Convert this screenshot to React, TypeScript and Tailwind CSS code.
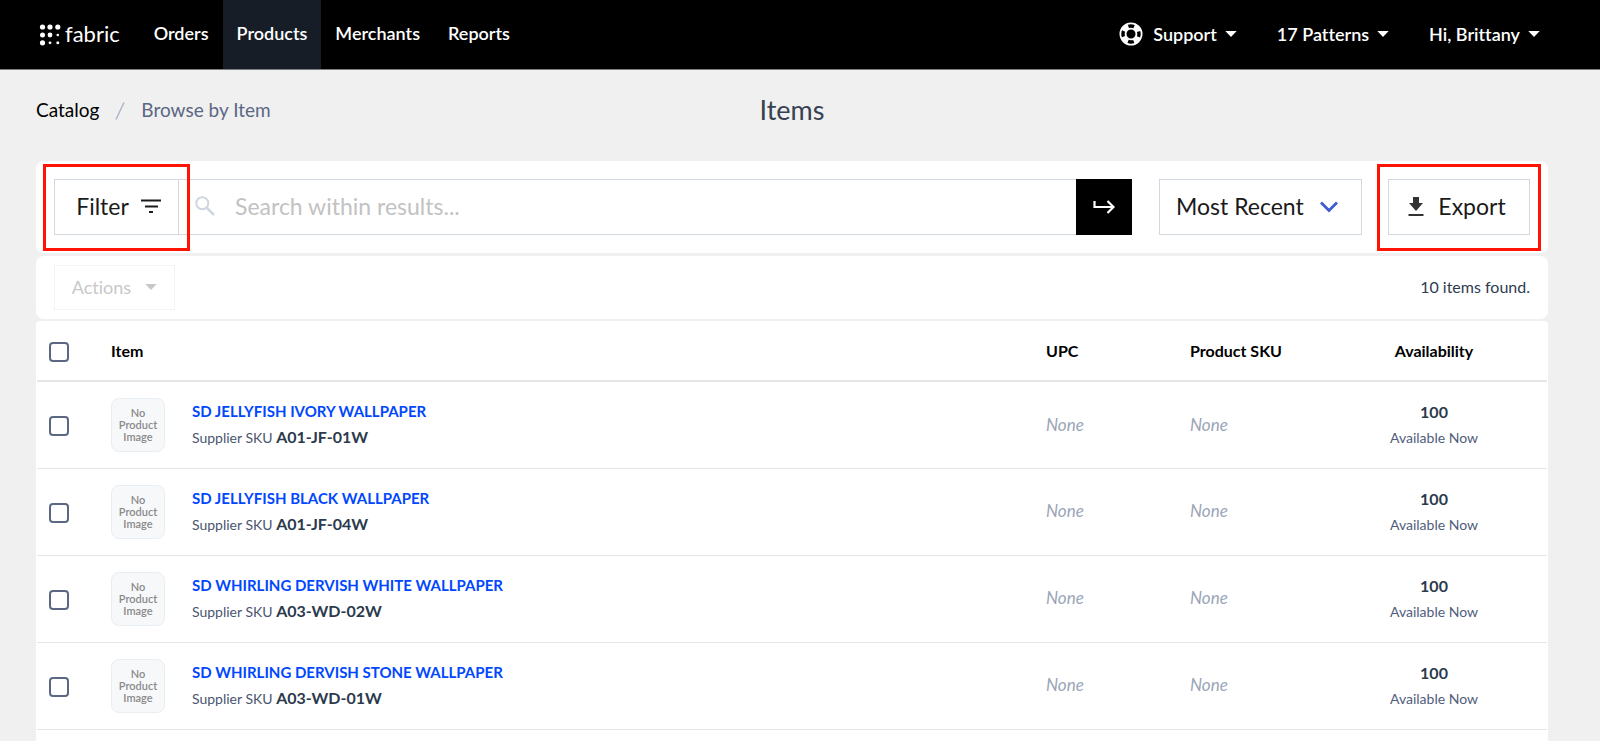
import React from "react";

type Item = { name: string; sku: string; qty: number };

const items: Item[] = [
  { name: "SD JELLYFISH IVORY WALLPAPER", sku: "A01-JF-01W", qty: 100 },
  { name: "SD JELLYFISH BLACK WALLPAPER", sku: "A01-JF-04W", qty: 100 },
  { name: "SD WHIRLING DERVISH WHITE WALLPAPER", sku: "A03-WD-02W", qty: 100 },
  { name: "SD WHIRLING DERVISH STONE WALLPAPER", sku: "A03-WD-01W", qty: 100 },
];

const navLinks = ["Orders", "Products", "Merchants", "Reports"];

function LogoDots() {
  const dots: [number, number, number][] = [
    [3.5, 3, 2.6], [11, 3, 2.6], [18.8, 3, 2.6],
    [3.5, 11, 2.5], [11, 11, 2.4], [18.8, 11, 1.3],
    [3.5, 18.8, 2.6], [11, 18.8, 1.4], [18.8, 18.8, 1.5],
  ];
  return (
    <svg className="size-[22px]" viewBox="0 0 22 22" fill="currentColor" aria-hidden="true">
      {dots.map(([x, y, r]) => (
        <circle key={`${x}-${y}`} cx={x} cy={y} r={r} />
      ))}
    </svg>
  );
}

function Lifebuoy() {
  return (
    <svg className="size-6" viewBox="0 0 24 24" fill="none" aria-hidden="true">
      <circle cx="12" cy="12" r="8" stroke="white" strokeWidth="7" />
      <circle cx="12" cy="12" r="8" stroke="black" strokeWidth="3.4" strokeDasharray="5.8 6.766" strokeDashoffset="2.9" />
    </svg>
  );
}

function Caret() {
  return (
    <svg className="h-[6px] w-3" viewBox="0 0 12 6" fill="currentColor" aria-hidden="true">
      <path d="M0.3 0H11.7L6 6Z" />
    </svg>
  );
}

function Menu({ label }: { label: string }) {
  return (
    <button type="button" className="flex items-center gap-2">
      {label}
      <Caret />
    </button>
  );
}

function Highlight({ children }: { children: React.ReactNode }) {
  return (
    <div className="relative flex shrink-0">
      {children}
      <span className="pointer-events-none absolute -inset-x-[11px] -top-[15px] -bottom-4 z-10 border-3 border-[#ff1303]" />
    </div>
  );
}

function Tick({ id, label }: { id: string; label: string }) {
  return (
    <label htmlFor={id} className="flex pt-[3px] pl-3">
      <input
        id={id}
        type="checkbox"
        aria-label={label}
        className="size-5 appearance-none rounded-[4px] border-2 border-[#5c6784] bg-white checked:bg-[#5c6784]"
      />
    </label>
  );
}

export default function App() {
  return (
    <div className="flex min-h-screen flex-col bg-[#f0f0f0] font-['Lato','Open_Sans',sans-serif] text-black [font-variant-ligatures:none]">
      <header className="flex h-[70px] items-stretch border-b border-[#7d7d7d] bg-black pr-[60px] pl-[39px] text-lg font-semibold text-white">
        <a href="#" className="mr-5 flex items-center gap-1 text-[22px] font-normal">
          <LogoDots />
          fabric
        </a>
        <nav className="flex">
          {navLinks.map((link) => (
            <a
              key={link}
              href="#"
              className={
                link === "Products"
                  ? "flex items-center bg-[#161d26] px-[14px] pb-[3px]"
                  : "flex items-center px-[14px] pb-[3px]"
              }
            >
              {link}
            </a>
          ))}
        </nav>
        <div className="ml-auto flex items-center gap-10 pb-[2px]">
          <div className="flex items-center gap-[10px]">
            <Lifebuoy />
            <Menu label="Support" />
          </div>
          <Menu label="17 Patterns" />
          <Menu label="Hi, Brittany" />
        </div>
      </header>

      <main className="flex flex-1 flex-col pr-[52px] pl-9">
        <div className="grid h-[91px] grid-cols-[1fr_auto_1fr] items-center pb-[10px]">
          <nav className="flex items-center gap-4 text-[19px]" aria-label="Breadcrumb">
            <a href="#">Catalog</a>
            <svg className="h-[18px] w-[10px]" viewBox="0 0 10 18" aria-hidden="true">
              <path d="M1 17.5L9 0.5" stroke="#a9b4c6" strokeWidth="1.4" />
            </svg>
            <span className="text-[#5c6784]">Browse by Item</span>
          </nav>
          <h1 className="text-[27px] text-[#374151]">Items</h1>
        </div>

        <section className="flex h-[92px] items-center rounded-lg bg-white px-[18px] text-[23px] text-[#1a1a1a]">
          <Highlight>
            <button type="button" className="flex h-14 w-[125px] items-center justify-center gap-3 border border-[#d2d8e0] pb-[2px] pl-1">
              Filter
              <svg className="h-[14px] w-5" viewBox="0 0 20 14" fill="currentColor" aria-hidden="true">
                <path d="M0 0.5H20V2.5H0ZM4 6.5H17V8.5H4ZM8 12H12V14H8Z" />
              </svg>
            </button>
          </Highlight>
          <form className="flex h-14 min-w-0 flex-1" onSubmit={(e) => e.preventDefault()}>
            <label className="flex min-w-0 flex-1 items-center gap-5 border-y border-[#d2d8e0] pb-[2px] pl-4">
              <svg className="size-5 shrink-0" viewBox="0 0 20 20" fill="none" stroke="#cfd6e0" strokeWidth="2" aria-hidden="true">
                <circle cx="7.3" cy="7.3" r="6" />
                <path d="M12 12L19 19" strokeWidth="2.5" />
              </svg>
              <input
                type="text"
                aria-label="Search within results"
                placeholder="Search within results..."
                className="min-w-0 flex-1 outline-none placeholder:text-[#c2c2c2]"
              />
            </label>
            <button type="submit" aria-label="Search" className="flex w-14 items-center justify-center bg-black">
              <svg className="h-[14px] w-[22px]" viewBox="0 0 22 14" fill="none" stroke="white" strokeWidth="2.2" aria-hidden="true">
                <path d="M1.5 1V7H20M14.5 1L20.5 7L14.5 13" />
              </svg>
            </button>
          </form>
          <div className="relative mr-[26px] ml-[27px] flex h-14 w-[203px] items-center">
            <select
              aria-label="Sort by"
              className="h-full w-full appearance-none border border-[#d2d8e0] bg-white pb-[2px] pl-4"
            >
              <option>Most Recent</option>
            </select>
            <svg className="pointer-events-none absolute right-6 h-3 w-[18px]" viewBox="0 0 18 12" fill="none" stroke="#3f5bd4" strokeWidth="2.8" aria-hidden="true">
              <path d="M1 1.5L9 9.5L17 1.5" />
            </svg>
          </div>
          <Highlight>
            <button type="button" className="flex h-14 w-[142px] items-center justify-center gap-[14px] border border-[#d2d8e0] pr-1 pb-[2px]">
              <svg className="h-[19px] w-4" viewBox="0 0 16 19" fill="#333333" aria-hidden="true">
                <path d="M5 0H11V6H15L8 14L1 6H5ZM0.5 17H15.5V19H0.5Z" />
              </svg>
              Export
            </button>
          </Highlight>
        </section>

        <section className="mt-[3px] flex h-[63px] items-center justify-between rounded-lg bg-white px-[18px]">
          <button
            type="button"
            disabled
            className="flex h-[45px] w-[121px] items-center justify-center gap-[14px] border border-[#f3f3f3] pb-[2px] text-lg text-[#c8c8c8]"
          >
            Actions
            <Caret />
          </button>
          <p className="pb-[2px] text-base text-[#2f3b4f]">10 items found.</p>
        </section>

        <section className="mt-[2px] flex-1 rounded-t bg-white px-px">
          <table className="w-full table-fixed text-base">
            <colgroup>
              <col className="w-[74px]" />
              <col className="w-[81px]" />
              <col />
              <col className="w-[144px]" />
              <col className="w-[131px]" />
              <col className="w-[226px]" />
            </colgroup>
            <thead>
              <tr className="h-[60px] border-b-2 border-[#e6e6e6] text-left">
                <th><Tick id="all" label="Select all items" /></th>
                <th colSpan={2}>Item</th>
                <th>UPC</th>
                <th>Product SKU</th>
                <th className="text-center">Availability</th>
              </tr>
            </thead>
            <tbody>
              {items.map((item) => (
                <tr key={item.sku} className="h-[87px] border-b border-[#e6e6e6]">
                  <td><Tick id={item.sku} label={`Select ${item.name}`} /></td>
                  <td>
                    <div className="flex size-[54px] items-center justify-center rounded-lg border border-[#e9eef2] bg-[#f7f8fa] text-center text-[11px] leading-3 font-semibold text-[#8a8a8a]">
                      No<br />Product<br />Image
                    </div>
                  </td>
                  <td>
                    <a href="#" className="block text-[15px] leading-[26px] font-bold text-[#0047ff]">{item.name}</a>
                    <p className="text-sm leading-[26px] text-[#4a5670]">
                      Supplier SKU <b className="text-base leading-[26px] text-[#2b3a4d]">{item.sku}</b>
                    </p>
                  </td>
                  <td className="pb-px text-[17px] text-[#9aa5b8] italic">None</td>
                  <td className="pb-px text-[17px] text-[#9aa5b8] italic">None</td>
                  <td className="text-center">
                    <p className="leading-[26px] font-bold text-[#2b3a4d]">{item.qty}</p>
                    <p className="text-sm leading-[26px] text-[#4f5d7c]">Available Now</p>
                  </td>
                </tr>
              ))}
            </tbody>
          </table>
        </section>
      </main>
    </div>
  );
}
